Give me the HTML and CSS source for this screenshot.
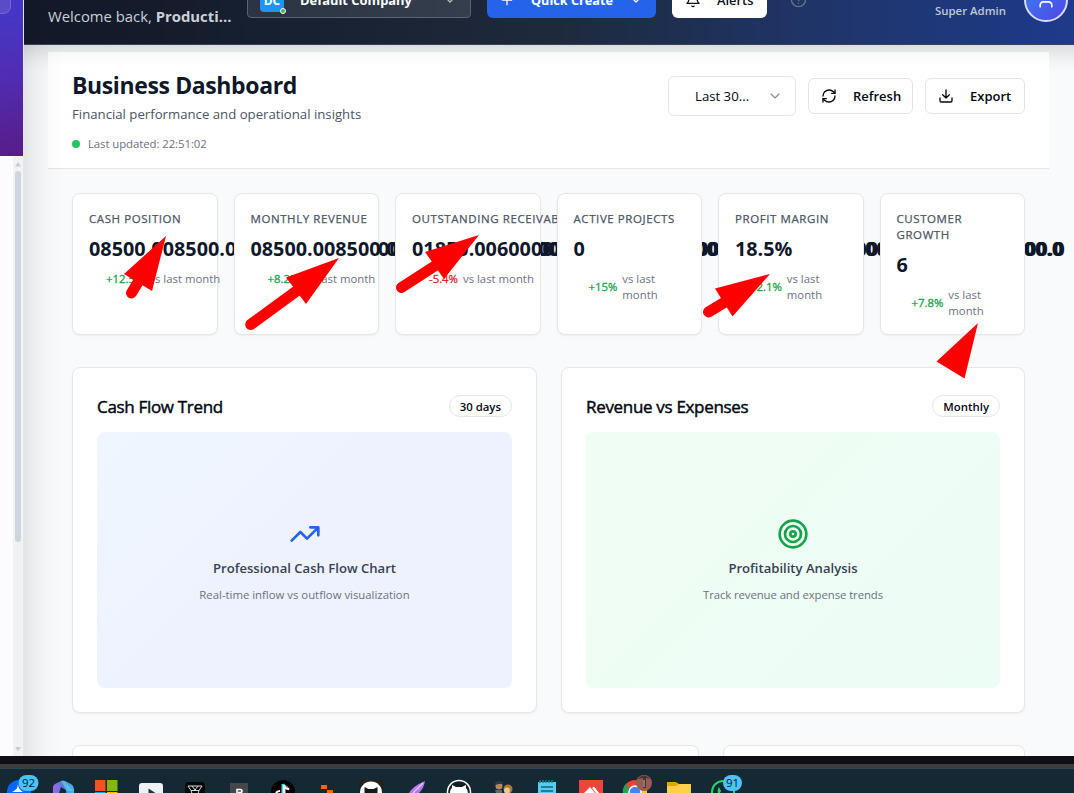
FILE: index.html
```html
<!DOCTYPE html>
<html lang="en">
<head>
<meta charset="utf-8">
<title>Business Dashboard</title>
<link rel="stylesheet" href="styles.css">
</head>
<body>
<div class="app">
  <aside class="sidebar">
    <div class="brand"><span class="brand-toggle"></span></div>
    <div class="side-body">
      <div class="scroll">
        <svg width="10" height="15" viewBox="0 0 10 15"><path d="M2 10.500 L5 6 L8 10.500Z" fill="#c9ccd4"/></svg>
        <span class="thumb"></span>
        <svg width="10" height="14" viewBox="0 0 10 14"><path d="M2 5 L5 9.500 L8 5Z" fill="#c9ccd4"/></svg>
      </div>
    </div>
  </aside>
  <div class="main">
    <header class="topbar">
      <div class="welcome">Welcome back, <b>Producti...</b></div>
      <div class="company">
        <span class="logo">DC<i></i></span>
        <span class="company-name">Default Company</span>
        <svg width="16" height="16" viewBox="0 0 24 24" class="stroke"><path d="m6 9 6 6 6-6"/></svg>
      </div>
      <div class="create">
        <svg width="16" height="16" viewBox="0 0 24 24" class="stroke"><path d="M5 12h14M12 5v14"/></svg>
        <span>Quick Create</span>
        <svg width="16" height="16" viewBox="0 0 24 24" class="stroke"><path d="m6 9 6 6 6-6"/></svg>
      </div>
      <div class="alerts">
        <svg width="16" height="16" viewBox="0 0 24 24" class="stroke"><path d="M6 8a6 6 0 0 1 12 0c0 7 3 9 3 9H3s3-2 3-9M10.300 21a1.940 1.940 0 0 0 3.400 0"/></svg>
        <span>Alerts</span>
      </div>
      <svg class="stroke help" width="17" height="17" viewBox="0 0 24 24"><circle cx="12" cy="12" r="10"/><path d="M9.100 9a3 3 0 0 1 5.800 1c0 2-3 3-3 3M12 17h.01"/></svg>
      <div class="role">Super Admin</div>
      <div class="avatar"><svg class="stroke" width="20" height="20" viewBox="0 0 24 24"><path d="M19 19v-2a4 4 0 0 0-4-4H9a4 4 0 0 0-4 4v2"/><circle cx="12" cy="5" r="4"/></svg></div>
    </header>
    <div class="content">
      <section class="page-head">
        <div>
          <h1>Business Dashboard</h1>
          <p class="sub">Financial performance and operational insights</p>
          <p class="updated"><i></i>Last updated: 22:51:02</p>
        </div>
        <div class="actions">
          <div class="select"><span>Last 30...</span><svg class="stroke" width="16" height="16" viewBox="0 0 24 24"><path d="m6 9 6 6 6-6"/></svg></div>
          <div class="btn refresh"><svg class="stroke" width="16" height="16" viewBox="0 0 24 24"><path d="M3 12a9 9 0 0 1 9-9 9.750 9.750 0 0 1 6.740 2.740L21 8"/><path d="M21 3v5h-5"/><path d="M21 12a9 9 0 0 1-9 9 9.750 9.750 0 0 1-6.740-2.740L3 16"/><path d="M8 16H3v5"/></svg><span>Refresh</span></div>
          <div class="btn export"><svg class="stroke" width="16" height="16" viewBox="0 0 24 24"><path d="M21 15v4a2 2 0 0 1-2 2H5a2 2 0 0 1-2-2v-4M7 10l5 5 5-5M12 15V3"/></svg><span>Export</span></div>
        </div>
      </section>
      <div class="body">
        <section class="stats">
          <article class="card stat"><div class="label">CASH POSITION</div><div class="value cash">08500.008500.00.0000000000000000000000000000000000000000000000000000000000000000000000.0</div><div class="change"><b>+12.5%</b><span>vs last month</span></div></article>
          <article class="card stat"><div class="label">MONTHLY REVENUE</div><div class="value">08500.008500.00000.00000000000000000000000000000000000000000000000000000.0</div><div class="change"><b>+8.2%</b><span>vs last month</span></div></article>
          <article class="card stat"><div class="label">OUTSTANDING RECEIVABLES</div><div class="value receivables">01850.0060000.0000000000000000000000000000000000000000000.0</div><div class="change down"><b>-5.4%</b><span>vs last month</span></div></article>
          <article class="card stat"><div class="label">ACTIVE PROJECTS</div><div class="value">0</div><div class="change two"><b>+15%</b><span>vs last<br>month</span></div></article>
          <article class="card stat"><div class="label">PROFIT MARGIN</div><div class="value">18.5%</div><div class="change two"><b>+2.1%</b><span>vs last<br>month</span></div></article>
          <article class="card stat"><div class="label">CUSTOMER<br>GROWTH</div><div class="value">6</div><div class="change two"><b>+7.8%</b><span>vs last<br>month</span></div></article>
        </section>
        <section class="charts">
          <article class="card panel">
            <div class="panel-head"><h2>Cash Flow Trend</h2><span class="pill">30 days</span></div>
            <div class="plot blue">
              <svg class="stroke" width="32" height="32" viewBox="0 0 24 24"><path d="M22 7l-8.500 8.500-5-5L2 17M16 7h6v6"/></svg>
              <p class="plot-title">Professional Cash Flow Chart</p>
              <p class="plot-sub">Real-time inflow vs outflow visualization</p>
            </div>
          </article>
          <article class="card panel">
            <div class="panel-head"><h2>Revenue vs Expenses</h2><span class="pill">Monthly</span></div>
            <div class="plot green">
              <svg class="stroke" width="32" height="32" viewBox="0 0 24 24"><circle cx="12" cy="12" r="10"/><circle cx="12" cy="12" r="6"/><circle cx="12" cy="12" r="2"/></svg>
              <p class="plot-title">Profitability Analysis</p>
              <p class="plot-sub">Track revenue and expense trends</p>
            </div>
          </article>
        </section>
        <section class="lower"><div class="card"></div><div class="card"></div></section>
      </div>
    </div>
  </div>
</div>
<div class="bezel"></div>
<footer class="taskbar">
  <svg viewBox="0 0 44 25"><circle cx="22" cy="24" r="12" fill="#0b66ff"/><path d="M21 15c0 5 2 7 5 9h-11c4-2 6-4 6-9z" fill="#fff"/><rect x="21.500" y="7" width="20" height="16" rx="8" fill="#4cc2ff"/><text x="31.500" y="19" class="badge">92</text></svg>
  <svg viewBox="0 0 44 25"><defs><linearGradient id="cp" x1="0" x2="1"><stop offset="0" stop-color="#a166e8"/><stop offset=".5" stop-color="#4f7ce0"/><stop offset="1" stop-color="#49b5f0"/></linearGradient></defs><path d="M12 25v-6q0-2 2-3l6-3q2-1 4 0l6 3q3 2 3 5v4h-8v-3l-5-3-2 6z" fill="url(#cp)"/><path d="M20 13q3-1 5 1l7 9h-6z" fill="#64d7e6" opacity=".6"/></svg>
  <svg viewBox="0 0 44 25"><path d="M10 12h10.500v11H10z" fill="#f8511d"/><path d="M22 12h10.500v11H22z" fill="#80bb03"/><path d="M10 24h10.500v1H10z" fill="#00a4ef"/><path d="M22 24h10.500v1H22z" fill="#ffb902"/></svg>
  <svg viewBox="0 0 44 25"><rect x="10" y="15" width="24" height="16" rx="3" fill="#edf2f3"/><path d="M19.500 20.500l7 4.500h-7z" fill="#27343c"/></svg>
  <svg viewBox="0 0 44 25"><rect x="12" y="14" width="20" height="20" rx="4" fill="#050505"/><path d="M15 18h14l-3 4.500h-8zM18 22.500l1 3m7-3l-1 3M19 18l3 4 3-4" fill="none" stroke="#d7dde0" stroke-width="1"/></svg>
  <svg viewBox="0 0 44 25"><rect x="13" y="15" width="18" height="14" fill="#45474b"/><path d="M20 25v-3.500h3.500q1.500 0 1.500 1.500t-1.500 1.500H21" fill="none" stroke="#fff" stroke-width="1.600"/></svg>
  <svg viewBox="0 0 44 25"><circle cx="22" cy="24" r="12" fill="#000"/><path d="M22 25v-9q1 4 5 4" fill="none" stroke="#25f4ee" stroke-width="3"/><path d="M23.500 26v-9q1 4 5 4" fill="none" stroke="#fe2c55" stroke-width="3"/><path d="M23 26v-9q1 4 5 4M19 23q-3 0-4 2" fill="none" stroke="#fff" stroke-width="2"/></svg>
  <svg viewBox="0 0 44 25"><path d="M16 17h6v4h-6zM22 22h6v3h-6z" fill="#ff6500"/></svg>
  <svg viewBox="0 0 44 25"><rect x="10" y="12" width="24" height="14" fill="#24201f"/><circle cx="22" cy="24.500" r="11" fill="#fff"/><path d="M15.500 25v-6l4 2h5l4-2v6z" fill="#171717"/></svg>
  <svg viewBox="0 0 44 25"><path d="M16 25q4-7 16-12-1 7-6 12z" fill="#b779e5"/><path d="M20 25l10-10" stroke="#ebc9ff" stroke-width="1.200"/></svg>
  <svg viewBox="0 0 44 25"><circle cx="22" cy="24" r="11.500" fill="#182027" stroke="#fff" stroke-width="1.500"/><path d="M13 25q0-4 2-5v-3l4 2h6l4-2v3q2 2 2 5z" fill="#fff"/></svg>
  <svg viewBox="0 0 44 25"><circle cx="18" cy="18" r="3.500" fill="#b58960"/><path d="M14 17q0-4 4-4t4 3l-4 0z" fill="#333a3d"/><path d="M14 22h7v3h-6z" fill="#5d6b6c"/><circle cx="27" cy="21" r="4.500" fill="#a97b38"/><circle cx="26" cy="22.500" r="3" fill="#efc699"/></svg>
  <svg viewBox="0 0 44 25"><rect x="13" y="14" width="18" height="14" fill="#5bcbed"/><path d="M15 12v3m3-3v3m3-3v3m3-3v3m3-3v3" stroke="#147f9c" stroke-width="1.500"/><path d="M16 19h12M16 23h12" stroke="#076783" stroke-width="1.700"/></svg>
  <svg viewBox="0 0 44 25"><rect x="10" y="12" width="24" height="14" fill="#ef443b"/><path d="M15 25l6-6 5 6zM23 20l2-1.500 5 6.500h-3z" fill="#fff"/></svg>
  <svg viewBox="0 0 44 25"><circle cx="22" cy="24" r="12" fill="#e64236"/><path d="M10 25q-1-5 3-9l6 9z" fill="#24a352"/><path d="M23 19h11v6H23z" fill="#fbc91d"/><circle cx="22" cy="24" r="6" fill="#4285f4" stroke="#fff" stroke-width="1.500"/><circle cx="31" cy="15" r="8" fill="#9a5c50"/><path d="M24.500 11q6-7 13 0l-4.500-1v10h-3V10z" fill="#4d3030"/><path d="M31 12v7" stroke="#d9b7ae" stroke-width="1"/></svg>
  <svg viewBox="0 0 44 25"><path d="M10 14h9l3 2h12v9H10z" fill="#e7a600"/><path d="M10 18h9l3-2h12v9H10z" fill="#ffd04d"/></svg>
  <svg viewBox="0 0 44 25"><circle cx="22" cy="24" r="11" fill="none" stroke="#25d366" stroke-width="2"/><path d="M17 25q-1-4 1-6l2 4-1 2z" fill="#25d366"/><rect x="22" y="7" width="19" height="16" rx="8" fill="#4cc2ff"/><text x="31.500" y="19" class="badge">91</text></svg>
</footer>
<svg class="marks" width="1074" height="793" viewBox="0 0 1074 793">
  <path d="M166 236L124 274l28 17zM339 258L286 277.500l20 26.500zM479 235L425 252l19 27zM770 274L715 288.500l17.500 28zM978 323L936.500 361.500l28 17z"/>
  <path class="tails" d="M131.500 293L140 279M250.700 324.500L302 287M401.500 287.500L441 262M708.500 312L730 299"/>
</svg>
</body>
</html>
```

FILE: styles.css
```css
* { box-sizing: border-box; }
body { margin: 0; width: 1074px; height: 793px; overflow: hidden; position: relative; font-family: "Open Sans", "Noto Sans", sans-serif; background: #f8fafc; color: #030712; }
h1, h2, p { margin: 0; }
svg { display: block; flex: none; }
.stroke { fill: none; stroke: currentColor; stroke-width: 2; stroke-linecap: round; stroke-linejoin: round; }

.app { display: flex; height: 756px; overflow: hidden; }
.sidebar { width: 24px; flex: none; display: flex; flex-direction: column; border-right: 1px solid #e4e6ec; background: #fcfcfe; }
.brand { height: 156px; background: linear-gradient(165deg, #4338ca 0%, #4f2eb4 45%, #581c87 100%); }
.brand-toggle { display: block; width: 11px; height: 14px; border: 1px solid #7466d3; border-width: 0 1px 1px 0; border-radius: 0 0 8px 0; background: #5a4bcb; }
.side-body { flex: 1; display: flex; justify-content: flex-end; }
.scroll { width: 10px; background: #f1f2f4; display: flex; flex-direction: column; align-items: center; }
.thumb { width: 6px; height: 371px; margin-bottom: auto; border-radius: 3px; background: #d0d4de; }

.main { width: 1050px; flex: none; position: relative; }
.main::after { content: ""; position: absolute; left: 0; top: 45px; bottom: 0; width: 42px; background: linear-gradient(90deg, rgba(0,0,0,.085), rgba(0,0,0,.04) 30%, rgba(0,0,0,.012) 65%, transparent); }
.topbar { height: 45px; overflow: hidden; display: flex; align-items: flex-start; padding-left: 24px; border-bottom: 1px solid #3a4354; background: linear-gradient(90deg, #111827 0%, #1e293b 50%, #1f3568 75%, #1e3a8a 100%); color: #fff; }
.welcome { width: 199px; margin-top: 5px; font-size: 14.850px; line-height: 22px; color: #cbd0d8; white-space: nowrap; }
.welcome b { font-weight: 700; }
.company, .create, .alerts { height: 36px; margin-top: -18px; display: flex; align-items: center; border-radius: 6px; font-size: 12.900px; font-weight: 700; white-space: nowrap; }
.company { width: 224px; padding: 0 12px; border: 1px solid #596373; border-radius: 4px; background: linear-gradient(90deg, #2b3442, #353e4d); }
.logo { width: 24px; height: 24px; margin-right: 16px; border-radius: 4px; background: #2094f3; position: relative; font-size: 12px; line-height: 25px; text-align: center; }
.logo i { position: absolute; right: -2px; bottom: -2px; width: 6px; height: 6px; border-radius: 50%; background: #22c55e; border: 1px solid #fff; }
.company-name { flex: 1; }
.company svg { opacity: .65; }
.create { width: 169px; margin-left: 16px; padding: 0 12px; background: #2563eb; font-size: 12.700px; }
.create span { margin: 0 auto 0 16px; }
.alerts { width: 95px; margin-left: 16px; padding-left: 13px; background: #fff; color: #0b1220; font-weight: 600; }
.alerts span { margin-left: 16px; }
.help { margin: -9px 0 0 23px; color: #667184; }
.role { width: 72px; margin: 3px 0 0 128px; font-size: 11.400px; line-height: 16px; font-weight: 600; color: #c0c8d8; white-space: nowrap; }
.avatar { width: 44px; height: 44px; margin: -22px 0 0 17px; border: 2px solid #d7e0f7; border-radius: 50%; background: linear-gradient(135deg, #3b82f6, #4f46e5); display: flex; align-items: flex-end; justify-content: center; padding-bottom: 9px; }

.content { padding: 7px 25px 0 24px; height: 711px; overflow: hidden; background: linear-gradient(180deg, #dcdfe0 0, #e5e7e9 7px, #f1f3f5 16px, #f8fafc 27px); }
.page-head { height: 117px; padding: 19px 24px 0; display: flex; justify-content: space-between; border-bottom: 1px solid #e2e4e9; background: linear-gradient(#f9f9f9, #fff 15px); }
h1 { font-size: 23px; line-height: 28px; font-weight: 700; letter-spacing: -.38px; color: #0f172a; white-space: nowrap; }
.sub { font-size: 13.200px; line-height: 20px; margin-top: 5px; color: #4b5563; white-space: nowrap; }
.updated { display: flex; align-items: center; gap: 8px; margin-top: 11px; font-size: 11.400px; line-height: 17px; letter-spacing: -.08px; color: #6b7280; }
.updated i { width: 8px; height: 8px; border-radius: 50%; background: #22c55e; }
.actions { display: flex; gap: 12px; align-items: flex-start; padding-top: 5px; font-size: 13.200px; }
.select, .btn { display: flex; align-items: center; border: 1px solid #e3e5e9; border-radius: 6px; background: #fff; white-space: nowrap; color: #030712; }
.select { width: 128px; height: 40px; padding: 0 12px 0 26px; justify-content: space-between; }
.select svg { color: #858a94; stroke-width: 1.700; }
.btn { height: 36px; margin-top: 2px; padding-left: 12px; gap: 16px; font-weight: 600; font-size: 13px; }
.refresh { width: 105px; }
.export { width: 100px; }

.body { padding: 24px; display: flex; flex-direction: column; gap: 32px; }
.card { background: #fff; border: 1px solid #e5e7eb; border-radius: 8px; box-shadow: 0 1px 2px rgba(0,0,0,.05); }
.stats { display: grid; grid-template-columns: repeat(6, 145.500px); grid-template-rows: 142px; gap: 16px; height: 142px; }
.stat { position: relative; padding: 17px 16px 0; white-space: nowrap; }
.label { font-size: 11.500px; line-height: 16px; letter-spacing: .58px; color: #4b5563; -webkit-text-stroke: .25px #4b5563; }
.value { margin-top: 8px; font-size: 19.800px; line-height: 28px; font-weight: 700; color: #0f172a; }
.value.cash { letter-spacing: .025px; }
.value.receivables { letter-spacing: .015px; }
.change { display: flex; align-items: center; gap: 5px; padding-left: 17px; margin-top: 8px; font-size: 11.350px; line-height: 16px; color: #6b7280; }
.change b { font-weight: 400; color: #16a34a; -webkit-text-stroke: .3px #16a34a; }
.change.down b { color: #dc2626; -webkit-text-stroke-color: #dc2626; }
.change.two { padding-left: 15px; }

.charts { display: grid; grid-template-columns: 465px 464px; gap: 24px; height: 346px; }
.panel { padding: 24px; }
.panel-head { display: flex; justify-content: space-between; align-items: center; height: 28px; margin-bottom: 12px; }
h2 { font-size: 17px; line-height: 28px; padding-top: 1px; font-weight: 400; letter-spacing: -.32px; color: #030712; -webkit-text-stroke: .45px #030712; }
.pill { height: 22px; padding: 0 10px; border: 1px solid #e5e7eb; border-radius: 11px; font-size: 11.400px; line-height: 21px; font-weight: 600; white-space: nowrap; }
.plot { height: 256px; border-radius: 8px; display: flex; flex-direction: column; align-items: center; padding-top: 86px; }
.blue { background: linear-gradient(135deg, #eff6ff, #eef2ff 45%, #eef2ff); }
.green { background: linear-gradient(135deg, #f0fdf4, #ecfdf5); }
.blue svg { color: #2563eb; }
.green svg { color: #16a34a; }
.plot-title { margin-top: 8px; font-size: 13.100px; line-height: 20px; font-weight: 600; color: #374151; }
.plot-sub { margin-top: 9px; font-size: 11.350px; line-height: 16px; color: #6b7280; }
.green .plot-sub { letter-spacing: -.08px; }
.lower { display: grid; grid-template-columns: 627px 302px; gap: 24px; }
.lower .card { height: 80px; }

.bezel { height: 12px; background: #0f0f18; border-bottom: 4px solid #3c3c3d; }
.taskbar { height: 25px; display: flex; overflow: hidden; border-top: 1px solid #34434d; background: #152935; }
.taskbar svg { width: 44px; height: 25px; margin-top: -1px; }
.taskbar svg:first-child { margin-left: -3px; }
.badge { font-size: 11.500px; text-anchor: middle; fill: #071923; }
.marks { position: absolute; left: 0; top: 0; fill: #f00; pointer-events: none; }
.tails { fill: none; stroke: #f00; stroke-width: 11; stroke-linecap: round; }
```
